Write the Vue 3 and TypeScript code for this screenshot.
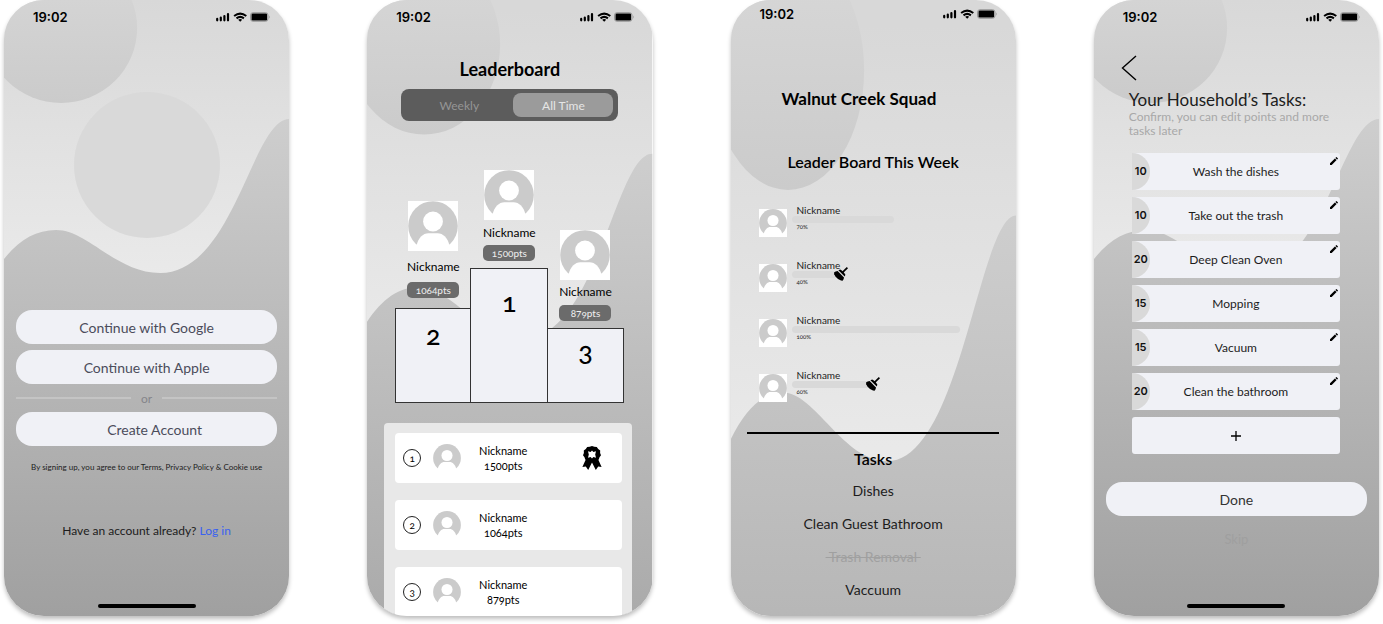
<script setup lang="ts">
import { defineComponent, h, ref } from 'vue'

const tab = ref<'Weekly' | 'All Time'>('All Time')
const tabs = ['Weekly', 'All Time'] as const

const podium = [
  { place: 2, name: 'Nickname', points: '1064pts', step: 'second' },
  { place: 1, name: 'Nickname', points: '1500pts', step: 'first' },
  { place: 3, name: 'Nickname', points: '879pts', step: 'third' },
]
const ranking = [
  { place: 1, name: 'Nickname', points: '1500pts' },
  { place: 2, name: 'Nickname', points: '1064pts' },
  { place: 3, name: 'Nickname', points: '879pts' },
]
const progress = [
  { name: 'Nickname', label: '70%', fill: 61, broom: false },
  { name: 'Nickname', label: '40%', fill: 29, broom: true },
  { name: 'Nickname', label: '100%', fill: 100, broom: false },
  { name: 'Nickname', label: '60%', fill: 48, broom: true },
]
const squadTasks = [
  { name: 'Dishes', done: false },
  { name: 'Clean Guest Bathroom', done: false },
  { name: 'Trash Removal', done: true },
  { name: 'Vaccuum', done: false },
]
const householdTasks = [
  { points: 10, name: 'Wash the dishes' },
  { points: 10, name: 'Take out the trash' },
  { points: 20, name: 'Deep Clean Oven' },
  { points: 15, name: 'Mopping' },
  { points: 15, name: 'Vacuum' },
  { points: 20, name: 'Clean the bathroom' },
]

const stops = (a: string, b: string) => [
  h('stop', { offset: '0', 'stop-color': a }),
  h('stop', { offset: '1', 'stop-color': b }),
]

/* Backdrop of a screen: a shaded disc at the top left and a wave below. */
const Backdrop = defineComponent({
  props: { id: { type: String, required: true }, top: { type: Number, default: 0 }, span: { type: Number, default: 616 } },
  setup(props) {
    return () =>
      h('svg', { viewBox: `0 ${props.top} 285 ${props.span}`, preserveAspectRatio: 'none', 'aria-hidden': 'true' }, [
        h('defs', [
          h('linearGradient', { id: `${props.id}-sky`, gradientUnits: 'userSpaceOnUse', x1: 0, y1: 0, x2: 0, y2: 280 }, stops('#d8d8d8', '#eaeaea')),
          h('linearGradient', { id: `${props.id}-disc`, x1: 0, y1: 0, x2: 0, y2: 1 }, stops('#d8d8d8', '#cbcbcb')),
          h('linearGradient', { id: `${props.id}-wave`, x1: 0, y1: 0, x2: 0, y2: 1 }, stops('#cecece', '#a0a0a0')),
        ]),
        h('rect', { x: 0, y: -20, width: 285, height: 640, fill: `url(#${props.id}-sky)` }),
        h('ellipse', { cx: 57, cy: 28, rx: 76, ry: 75, fill: `url(#${props.id}-disc)` }),
        h('path', {
          d: 'M0 259C15 240 32 230 52 230C84 230 112 273 156 273C230 273 248 119 285 119V616H0Z',
          fill: `url(#${props.id}-wave)`,
        }),
      ])
  },
})

const StatusBar = defineComponent({
  setup() {
    return () => [
      h('time', '19:02'),
      h('svg', { width: 55, height: 10, viewBox: '0 0 55 10', 'aria-hidden': 'true' }, [
        h('path', { d: 'M2.2 8.3V6.9M5.8 8.3V5.6M9.4 8.3V4M13 8.3V2', stroke: '#000', 'stroke-width': 2.2, 'stroke-linecap': 'round' }),
        h('path', { d: 'M19.1 4Q25.2-.8 31.3 4M21.5 6.4Q25.2 3.4 28.9 6.4', stroke: '#000', 'stroke-width': 2, fill: 'none' }),
        h('path', { d: 'M23.2 7.8Q25.2 6.3 27.2 7.8L25.2 9.8Z', fill: '#000' }),
        h('rect', { x: 35.5, y: 0.7, width: 17.5, height: 8.6, rx: 2.4, fill: 'none', stroke: '#999' }),
        h('rect', { x: 36.5, y: 1.5, width: 15.6, height: 7, rx: 1.3, fill: '#000' }),
        h('path', { d: 'M54 3.6Q55.4 5 54 6.4Z', fill: '#999' }),
      ]),
    ]
  },
})

const Avatar = defineComponent({
  setup() {
    return () =>
      h('svg', { viewBox: '0 0 50 50', role: 'img', 'aria-label': 'Profile picture' }, [
        h('rect', { width: 50, height: 50, fill: '#fff' }),
        h('circle', { cx: 25, cy: 25, r: 24.8, fill: '#cbcbcb' }),
        h('circle', { cx: 25, cy: 20.5, r: 9.9, fill: '#fff' }),
        h('path', { d: 'M8.5 45C10 37 15 32.3 20.5 32.3H29.5C35 32.3 40 37 41.5 45V50H8.5Z', fill: '#fff' }),
      ])
  },
})
</script>

<template>
  <main class="screens">
    <section class="phone" aria-label="Welcome">
      <Backdrop id="welcome" class="backdrop" />
      <header class="status"><StatusBar /></header>
      <div class="logo"></div>
      <div class="signup">
        <button type="button" class="pill">Continue with Google</button>
        <button type="button" class="pill">Continue with Apple</button>
        <div class="or"><span>or</span></div>
        <button type="button" class="pill create">Create Account</button>
      </div>
      <p class="terms">By signing up, you agree to our Terms, Privacy Policy &amp; Cookie use</p>
      <p class="login">Have an account already? <a href="#login">Log in</a></p>
      <div class="home"></div>
    </section>

    <section class="phone" aria-label="Leaderboard">
      <Backdrop id="board" class="backdrop" :top="-9" :span="513" />
      <header class="status"><StatusBar /></header>
      <h1 class="board-title">Leaderboard</h1>
      <div class="tabs">
        <button v-for="t in tabs" :key="t" type="button" :class="{ active: tab === t }" :aria-pressed="tab === t" @click="tab = t">{{ t }}</button>
      </div>
      <div class="podium">
        <div v-for="p in podium" :key="p.place" class="column" :class="p.step">
          <Avatar class="portrait" />
          <span class="name">{{ p.name }}</span>
          <span class="points">{{ p.points }}</span>
          <div class="step">{{ p.place }}</div>
        </div>
      </div>
      <ol class="ranking">
        <li v-for="r in ranking" :key="r.place">
          <span class="place">{{ r.place }}</span>
          <Avatar class="face" />
          <span class="score">{{ r.name }}<br />{{ r.points }}</span>
          <svg v-if="r.place === 1" class="medal" viewBox="0 0 20 24" aria-hidden="true">
            <path d="M4 13L.4 21L3.8 20.6L6.2 24L10 16.5L13.8 24L16.2 20.6L19.6 21L16 13Z" />
            <path d="M10 0L12.3 .8L14.8 1L16.2 3L18.2 4.5L18.1 7L19 9.2L17.5 11.3L16.8 13.6L14.5 14.6L12.5 16.6L10 16.2L7.5 16.6L5.5 14.6L3.2 13.6L2.5 11.3L1 9.2L1.9 7L1.8 4.5L3.8 3L5.2 1L7.7 .8Z" />
            <path class="star" d="M10 4.4L11.4 6L14 5.2L13.2 8.5L14 11.8L11.4 11L10 12.6L8.6 11L6 11.8L6.8 8.5L6 5.2L8.6 6Z" />
          </svg>
        </li>
      </ol>
    </section>

    <section class="phone" aria-label="Squad">
      <Backdrop id="squad" class="backdrop" :top="-16" :span="386" />
      <header class="status high"><StatusBar /></header>
      <h1 class="squad-title">Walnut Creek Squad</h1>
      <h2 class="week">Leader Board This Week</h2>
      <ul class="progress">
        <li v-for="(p, i) in progress" :key="i">
          <Avatar class="thumb" />
          <div class="meter">
            <span class="who">{{ p.name }}</span>
            <div class="track">
              <div class="fill" :style="{ width: p.fill + '%' }">
                <svg v-if="p.broom" class="broom" viewBox="0 0 14 14" aria-hidden="true">
                  <path class="handle" d="M13.4 .6L8.6 5.4" />
                  <path d="M4.4 3.3L6.2 2.6Q8 3.4 9.2 4.8Q10.6 6.2 11.4 7.8L10.7 9.6Z" />
                  <path d="M3.6 4L10 10.4Q9.8 12.4 8.6 13.8L7 13.6L4 12L1.4 9.6L.2 7.2L0 5.6Q1.6 4.2 3.6 4Z" />
                </svg>
              </div>
            </div>
            <span class="percent">{{ p.label }}</span>
          </div>
        </li>
      </ul>
      <hr class="divider" />
      <h2 class="tasks-title">Tasks</h2>
      <ul class="tasks">
        <li v-for="t in squadTasks" :key="t.name"><s v-if="t.done">&nbsp;{{ t.name }}&nbsp;</s><template v-else>{{ t.name }}</template></li>
      </ul>
    </section>

    <section class="phone" aria-label="Household tasks">
      <Backdrop id="household" class="backdrop" />
      <header class="status"><StatusBar /></header>
      <button type="button" class="back" aria-label="Back">
        <svg viewBox="0 0 16 26" aria-hidden="true"><path d="M15 1L1.5 13L15 25" /></svg>
      </button>
      <div class="intro">
        <h1>Your Household’s Tasks:</h1>
        <p>Confirm, you can edit points and more tasks later</p>
      </div>
      <ul class="household">
        <li v-for="t in householdTasks" :key="t.name">
          <span class="worth">{{ t.points }}</span>
          <span class="task">{{ t.name }}</span>
          <button type="button" class="edit" :aria-label="'Edit ' + t.name">
            <svg viewBox="0 0 8 8" aria-hidden="true"><path d="M0 8V6.3L4.9 1.4L6.6 3.1L1.7 8ZM5.4 .9L6.1 .2Q6.4 0 6.7 .2L7.8 1.3Q8 1.6 7.8 1.9L7.1 2.6Z" /></svg>
          </button>
        </li>
        <li>
          <button type="button" class="add" aria-label="Add a task">
            <svg viewBox="0 0 12 12" aria-hidden="true"><path d="M6 1V11M1 6H11" /></svg>
          </button>
        </li>
      </ul>
      <button type="button" class="pill done">Done</button>
      <button type="button" class="skip">Skip</button>
      <div class="home"></div>
    </section>
  </main>
</template>

<style>
body {
  margin: 0;
  background: #fff;
}
</style>

<style scoped>
.screens {
  display: grid;
  grid-template-columns: repeat(4, minmax(0, 1fr));
  gap: 78px;
  padding: 0 4px 8px;
  font-family: Lato, 'Open Sans', sans-serif;
  font-variant-numeric: oldstyle-nums;
  color: #1c1c1c;
}
h1, h2, p, ul, ol {
  margin: 0;
  padding: 0;
  list-style: none;
}
button {
  border: 0;
  padding: 0;
  background: none;
  font: inherit;
  color: inherit;
  cursor: pointer;
}
.phone {
  position: relative;
  display: flex;
  flex-direction: column;
  min-height: 616px;
  border-radius: 40px;
  overflow: hidden;
  isolation: isolate;
  box-shadow: 0 3px 4px rgba(0, 0, 0, 0.25);
}
.backdrop {
  position: absolute;
  inset: 0;
  width: 100%;
  height: 100%;
  z-index: -1;
}
.status {
  display: flex;
  justify-content: space-between;
  align-items: center;
  height: 34px;
  padding: 0 19px 0 29px;
  font: 600 13px/16px Inter, sans-serif;
  color: #000;
}
.status.high {
  height: 28px;
}
.home {
  width: 98px;
  height: 4px;
  margin: auto auto 8px;
  border-radius: 2px;
  background: #000;
}
.pill {
  height: 34px;
  border-radius: 16px;
  background: #f0f1f6;
  font-size: 14px;
  color: #4b4c5b;
}

.logo {
  width: 146px;
  height: 146px;
  margin: 58px auto 72px;
  border-radius: 50%;
  background: #d9d9d9;
}
.signup {
  display: flex;
  flex-direction: column;
  gap: 6px;
  padding: 0 12px;
}
.or {
  display: flex;
  align-items: center;
  gap: 10px;
  height: 16px;
  font-size: 12px;
  color: #85858b;
}
.or::before,
.or::after {
  content: '';
  flex: 1;
  height: 2px;
  background: #c4c4c4;
}
.create {
  padding-left: 16px;
}
.terms {
  margin-top: 15px;
  font-size: 8px;
  line-height: 12px;
  text-align: center;
}
.login {
  margin-top: 50px;
  font-size: 12px;
  line-height: 16px;
  text-align: center;
}
.login a {
  color: #3a62f0;
  text-decoration: none;
}

.board-title {
  margin-top: 24px;
  font-size: 18px;
  line-height: 22px;
  text-align: center;
  color: #000;
}
.tabs {
  display: grid;
  grid-template-columns: 27fr 25fr;
  height: 24px;
  margin: 9px 35px 0 34px;
  padding: 4px;
  border-radius: 8px;
  background: #5c5c5c;
  font-size: 12px;
  color: #959595;
}
.tabs button {
  border-radius: 8px;
}
.tabs .active {
  background: #9b9b9b;
  color: #e6e6e6;
}
.podium {
  display: grid;
  grid-template-columns: repeat(3, 1fr);
  align-items: end;
  margin: 49px 29px 0 28px;
}
.column {
  display: flex;
  flex-direction: column;
  align-items: center;
  color: #000;
}
.portrait {
  width: 50px;
  height: 50px;
}
.name {
  margin-top: 5px;
  font-size: 12px;
  line-height: 16px;
}
.points {
  width: 52px;
  margin: 4px 0 7px;
  border-radius: 5px;
  background: #6b6b6b;
  font-size: 10px;
  line-height: 16px;
  text-align: center;
  color: #f0f0f0;
}
.second .name {
  margin-top: 8px;
}
.second .points {
  margin: 7px 0 10px;
}
.third .name {
  margin-top: 4px;
}
.third .points {
  margin: 5px 0 7px;
}
.step {
  box-sizing: border-box;
  align-self: stretch;
  height: 95px;
  padding-top: 10px;
  border: 1px solid #333;
  background: #f0f1f6;
  font-size: 27px;
  font-weight: 500;
  line-height: 32px;
  text-align: center;
}
.first .step {
  height: 135px;
  padding-top: 17px;
  margin: 0 -1px;
}
.third .step {
  height: 75px;
  padding-top: 6px;
}
.ranking {
  display: flex;
  flex: 1;
  flex-direction: column;
  gap: 17px;
  margin: 20px 21px 0 17px;
  padding: 10px 10px 0 11px;
  border-radius: 4px 4px 0 0;
  background: #e8e8e8;
}
.ranking li {
  display: flex;
  align-items: center;
  height: 50px;
  padding: 0 20px 0 8px;
  border-radius: 4px;
  background: #fff;
  color: #000;
}
.ranking li:last-child {
  height: 49px;
  border-radius: 4px 4px 0 0;
}
.place {
  width: 16px;
  border: 1px solid #222;
  border-radius: 50%;
  font-size: 10px;
  line-height: 16px;
  text-align: center;
}
.face {
  width: 28px;
  height: 28px;
  margin-left: 12px;
}
.score {
  width: 84px;
  font-size: 11px;
  line-height: 15px;
  text-align: center;
}
.medal {
  width: 20px;
  height: 24px;
  margin-left: auto;
}
.medal .star {
  fill: #fff;
}

.squad-title {
  margin: 60px 51px 0;
  font-size: 17px;
  line-height: 22px;
  color: #000;
}
.week {
  margin-top: 41px;
  font-size: 16px;
  font-weight: 600;
  line-height: 22px;
  text-align: center;
  color: #000;
}
.progress {
  display: grid;
  gap: 22px;
  margin: 31px 56px 0 28px;
}
.progress li {
  display: flex;
  align-items: flex-end;
  gap: 5px;
}
.thumb {
  width: 28px;
  height: 28px;
}
.meter {
  display: flex;
  flex: 1;
  flex-direction: column;
}
.who {
  padding-left: 5px;
  font-size: 10px;
  line-height: 12px;
}
.track {
  height: 7px;
}
.fill {
  position: relative;
  height: 7px;
  border-radius: 4px;
  background: #d9d9d9;
}
.percent {
  padding: 0 0 6px 5px;
  font-size: 6px;
  line-height: 8px;
}
.broom {
  position: absolute;
  right: -8px;
  bottom: -3px;
  width: 14px;
  height: 14px;
}
.broom .handle {
  stroke: #000;
  stroke-width: 1.7;
}
.divider {
  box-sizing: border-box;
  height: 2px;
  margin: 30px 17px 0 16px;
  border: 0;
  background: #000;
}
.tasks-title {
  margin-top: 14px;
  font-size: 16px;
  font-weight: 600;
  line-height: 22px;
  text-align: center;
  color: #000;
}
.tasks {
  display: grid;
  gap: 13px;
  margin-top: 11px;
  font-size: 14px;
  line-height: 20px;
  text-align: center;
}
.tasks s {
  color: #a0a0a0;
}

.back {
  align-self: flex-start;
  width: 16px;
  height: 26px;
  margin: 21px 0 0 27px;
}
.back svg {
  display: block;
  fill: none;
  stroke: #000;
  stroke-width: 1.4;
}
.intro {
  padding: 9px 35px 0;
}
.intro h1 {
  font-size: 17px;
  font-weight: 400;
  line-height: 20px;
}
.intro p {
  font-size: 12px;
  line-height: 14px;
  color: #a8a8a8;
}
.household {
  display: grid;
  gap: 7px;
  margin: 15px 39px 0 38px;
}
.household li {
  position: relative;
  display: flex;
  align-items: center;
  height: 37px;
  border-radius: 3px;
  background: #f0f1f6;
}
.worth {
  width: 18px;
  border-radius: 0 19px 19px 0;
  background: #d9d9d9;
  font: 600 11px/37px Inter, sans-serif;
  text-align: center;
  color: #111;
}
.task {
  flex: 1;
  padding-right: 18px;
  font-size: 12px;
  text-align: center;
}
.edit {
  position: absolute;
  top: 4px;
  right: 2px;
  width: 8px;
  height: 8px;
}
.edit svg {
  display: block;
}
.add {
  flex: 1;
  align-self: stretch;
}
.add svg {
  display: block;
  width: 12px;
  height: 12px;
  margin: auto;
  stroke: #000;
  stroke-width: 1.3;
}
.done {
  margin: 28px 12px 0;
  color: #333;
}
.skip {
  align-self: center;
  margin-top: 14px;
  font-size: 13px;
  line-height: 18px;
  color: #9f9f9f;
}
</style>
